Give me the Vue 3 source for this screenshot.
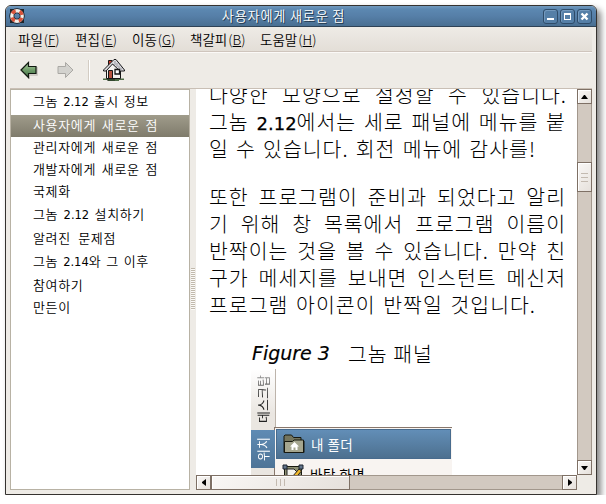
<script setup>
const menus = [
  { label: '파일', key: 'F', w: 57 },
  { label: '편집', key: 'E', w: 57 },
  { label: '이동', key: 'G', w: 58 },
  { label: '책갈피', key: 'B', w: 70 },
  { label: '도움말', key: 'H', w: 60 }
]
const topics = [
  { t: ['그놈 ', '2.12', ' 출시 정보'], w: 116, tall: true },
  { t: ['사용자에게 새로운 점'], w: 125, on: true },
  { t: ['관리자에게 새로운 점'], w: 125 },
  { t: ['개발자에게 새로운 점'], w: 125 },
  { t: ['국제화'], w: 41 },
  { t: ['그놈 ', '2.12', ' 설치하기'], w: 112, tall: true },
  { t: ['알려진 문제점'], w: 83 },
  { t: ['그놈 ', '2.14', '와 그 이후'], w: 116, tall: true },
  { t: ['참여하기'], w: 53 },
  { t: ['만든이'], w: 41 }
]
const paragraphs = [
  [
    { t: ['다양한 모양으로 설정할 수 있습니다.'], w: 358 },
    { t: ['그놈 ', '2.12', '에서는 세로 패널에 메뉴를 붙'], w: 357 },
    { t: ['일 수 있습니다. 회전 메뉴에 감사를!'], w: 327 }
  ],
  [
    { t: ['또한 프로그램이 준비과 되었다고 알리'], w: 357 },
    { t: ['기 위해 창 목록에서 프로그램 이름이'], w: 357 },
    { t: ['반짝이는 것을 볼 수 있습니다. 만약 친'], w: 357 },
    { t: ['구가 메세지를 보내면 인스턴트 메신저'], w: 357 },
    { t: ['프로그램 아이콘이 반짝일 것입니다.'], w: 327 }
  ]
]
</script>

<template>
  <div class="window">
    <header class="titlebar">
      <svg class="buoy" width="16" height="16" viewBox="0 0 16 16">
        <path d="M1 1h3v3H1zM12 1h3v3h-3zM1 12h3v3H1zM12 12h3v3h-3z" fill="#20252b" />
        <circle cx="8" cy="8" r="5.2" fill="none" stroke="#15191e" stroke-width="5" />
        <circle cx="8" cy="8" r="5.2" fill="none" stroke="#f3efea" stroke-width="3.4" />
        <circle cx="8" cy="8" r="5.2" fill="none" stroke="#d9533a" stroke-width="3.4" stroke-dasharray="4.083 4.083" stroke-dashoffset="-2.04" />
      </svg>
      <span class="title">사용자에게 새로운 점</span>
      <div class="winbtns">
        <span class="wb"><svg width="9" height="9"><path d="M1 6h7v2H1z" fill="#fff" /></svg></span>
        <span class="wb"><svg width="9" height="9"><path d="M1 1h7v7H1zM2 3v4h5V3z" fill="#fff" fill-rule="evenodd" /></svg></span>
        <span class="wb"><svg width="9" height="9"><path d="M1.500 1.500l6 6M7.500 1.500l-6 6" stroke="#fff" stroke-width="2.400" /></svg></span>
      </div>
    </header>
    <nav class="menubar">
      <span v-for="m in menus" :key="m.key" class="menu" :style="{ width: m.w + 'px' }">{{ m.label }}<span class="accel">(<u>{{ m.key }}</u>)</span></span>
    </nav>
    <div class="toolbar">
      <svg width="18" height="18" viewBox="0 0 18 18">
        <defs>
          <linearGradient id="green" x1="0" y1="0" x2="0" y2="1"><stop offset="0" stop-color="#b2d0a6" /><stop offset=".5" stop-color="#6f9c69" /><stop offset="1" stop-color="#3f6d43" /></linearGradient>
        </defs>
        <path d="M2 10l7 7v-3h8V6" fill="none" stroke="#c5c1ba" stroke-width="1.5" />
        <path d="M1 9l7.500-7.500V5.500H16V12.500H8.500V16.500z" fill="url(#green)" stroke="#101810" stroke-width="1.200" />
      </svg>
      <svg class="fwd" width="18" height="18" viewBox="0 0 18 18">
        <path d="M17 9L9.500 1.500V5.500H2V12.500H9.500V16.500z" fill="#d3d2ce" stroke="#aaa8a4" />
      </svg>
      <i class="tsep"></i>
      <svg class="home" width="24" height="24" viewBox="0 0 24 24">
        <path d="M1 20.500h21v1.500H17v1H6v-1H1z" fill="#4d6b45" />
        <path d="M6.500 2.500H10V6L6.500 9z" fill="#c8402f" stroke="#1c1513" />
        <path d="M4.500 11.500L9 5l9.500 6v9.500h-14z" fill="#f4f2f0" stroke="#151515" />
        <path d="M1.500 12L7 6.500 12 1.500h2L22.500 12v1H18L10.500 6 4 13H1.500z" fill="#dcdce0" stroke="#19191b" />
        <path d="M13 3v4M15 5v4M17 7.500v4M19 9.500v3" stroke="#96969e" />
        <path d="M6.500 12.500h4V20.500h-4z" fill="#b6523f" stroke="#151515" />
        <path d="M13 11.500h4.500v4.500H13z" fill="#fff" stroke="#151515" stroke-width="1.300" />
        <path d="M5 22h8" stroke="#1b2418" />
      </svg>
    </div>
    <main class="body">
      <aside class="sidebar">
        <div v-for="(r, i) in topics" :key="i" class="row" :class="{ tall: r.tall, on: r.on }">
          <span class="fit" :style="{ width: r.w + 'px' }"><span v-for="(s, k) in r.t" :key="k" :class="{ num: k === 1 }">{{ s }}</span></span>
        </div>
      </aside>
      <div class="splitter"><i class="grip"></i></div>
      <section class="pane">
        <article class="doc">
          <div v-for="(p, i) in paragraphs" :key="i" class="para">
            <div v-for="(l, j) in p" :key="j" class="line fit" :style="{ width: l.w + 'px' }"><span v-for="(s, k) in l.t" :key="k" :class="{ num: k === 1 }">{{ s }}</span></div>
          </div>
          <div class="caption"><em>Figure 3</em><span>그놈 패널</span></div>
          <div class="figure">
            <div class="strip">
              <span class="tab desk">데스크탑</span>
              <span class="tab place">위치</span>
            </div>
            <div class="popup">
              <div class="entry sel">
                <svg width="22" height="20" viewBox="0 0 22 20">
                  <path d="M1 18.500V2L2 1h6.500l2 2.500H18V7h3v11.500z" fill="#74755e" stroke="#17180f" />
                  <path d="M1.500 7.500h8L11 6h9.500v12.500h-19z" fill="#a5a68f" stroke="#17180f" />
                  <path d="M7 12.500L11.500 8l4.500 4.500h-1.500V16h-2v-2.500h-2V16h-2v-3.500z" fill="#fff" />
                </svg>
                <span>내 폴더</span>
              </div>
              <div class="entry">
                <svg width="22" height="20" viewBox="0 0 22 20">
                  <path d="M2.500 2.500h17v16h-17z" fill="#8c8f73" stroke="#17180f" />
                  <path d="M5 5h7l3 3v9H5z" fill="#f5f5ef" stroke="#222" />
                  <path d="M10 13l7-8 2.500 2-7 8-3 1z" fill="#f0b92c" stroke="#222" />
                  <path d="M1 1h4v4H1zM17 1h4v4h-4z" fill="#62748b" stroke="#1c2430" />
                </svg>
                <span>바탕 화면</span>
              </div>
            </div>
          </div>
        </article>
        <div class="vbar">
          <span class="btn"><svg width="7" height="4"><path d="M0 4h7L4 0H3z" fill="#000" /></svg></span>
          <span class="vgap"></span>
          <span class="btn vthumb"><i></i><i></i><i></i></span>
          <span class="fill"></span>
          <span class="btn"><svg width="7" height="4"><path d="M0 0h7L4 4H3z" fill="#000" /></svg></span>
        </div>
        <div class="hbar">
          <span class="btn"><svg width="4" height="7"><path d="M4 0v7L0 4V3z" fill="#000" /></svg></span>
          <span class="btn hthumb"><i></i><i></i><i></i></span>
          <span class="fill"></span>
          <span class="btn"><svg width="4" height="7"><path d="M0 0v7L4 4V3z" fill="#000" /></svg></span>
        </div>
      </section>
    </main>
  </div>
</template>

<style>
body { background: #fff; overflow: hidden; }
</style>

<style scoped>
* { box-sizing: border-box; }
svg { display: block; flex: none; }
.window {
  width: 592px; height: 490px; margin: 5px 0 0 5px;
  display: flex; flex-direction: column;
  border: 1px solid #35322f; border-radius: 6px 6px 0 0;
  background: #eeebe6; overflow: hidden;
  box-shadow: 4px 4px 6px rgba(0, 0, 0, .48);
  font-family: "Noto Sans CJK KR", sans-serif;
  font-size: 13px; font-weight: 350; color: #000;
}
.titlebar {
  height: 21px; flex: none; display: flex; align-items: center;
  background: linear-gradient(#7199be 0, #5c88b1 3px, #567fa8 50%, #496f92);
  border-bottom: 1px solid #2e4256; padding: 0 4px 0 3px;
}
.title {
  flex: 1; text-align: center; color: #fff; font-size: 13.2px; line-height: 20px; letter-spacing: .75px;
  padding-right: 1px; white-space: nowrap; text-shadow: 1px 1px 0 #24384c;
}
.winbtns { display: flex; gap: 2px; }
.wb {
  width: 15px; height: 15px; display: flex; align-items: center; justify-content: center;
  border: 1px solid #2f4c69; border-radius: 3px; background: #557fa7;
  box-shadow: inset 1px 1px 0 #7399bd;
}
.menubar {
  height: 25px; flex: none; display: flex; align-items: center; margin-right: 4px; margin-left: 4px;
  padding-left: 8px; background: linear-gradient(#eeebe6, #e3ded7);
  border-bottom: 1px solid #cfc5bd; box-shadow: 0 1px 0 #fbf9f7;
}
.menu { white-space: nowrap; font-size: 13.5px; line-height: 22px; }
.accel { font-size: 13.5px; font-weight: 300; margin-left: 1px; }
.toolbar { height: 36px; flex: none; display: flex; align-items: center; padding-left: 14px; }
.fwd { margin-left: 18px; }
.tsep { width: 2px; height: 21px; margin: 0 12px 0 14px; border-left: 1px solid #d3ccc3; border-right: 1px solid #fff; }
.body {
  height: 402px; flex: none; display: flex; margin: 0 4px;
  border-top: 1px solid #c9bfb5;
}
.sidebar { width: 180px; height: 401px; border: 1px solid #b8b2a4; background: #fff; }
.row { height: 22px; display: flex; align-items: center; padding: 0 0 2px 22px; line-height: 20px; letter-spacing: .65px; }
.tall { height: 25px; }
.row .num { font-family: "DejaVu Sans", sans-serif; font-weight: 400; font-size: 11.5px; letter-spacing: 0; }
.fit { display: block; text-align: justify; text-align-last: justify; }
.on { color: #fff; background: linear-gradient(#a09c8b, #7f7b6b); }
.splitter { width: 6px; display: flex; align-items: center; justify-content: center; }
.grip { width: 4px; height: 42px; background: repeating-linear-gradient(#c1b9ac 0 1px, #fbfaf8 1px 2px); margin-top: -2px; }
.pane {
  width: 396px; height: 401px; display: grid;
  grid-template-columns: 381px 15px; grid-template-rows: 386px 15px;
}
.doc { background: #fff; overflow: hidden; padding: 0 0 0 13px; font-weight: 300; }
.para { margin-bottom: 21px; }
.para:first-child { margin-top: -8px; }
.line { height: 27px; line-height: 27px; font-size: 20.5px; letter-spacing: 1px; }
.line .num { font-family: "DejaVu Sans", sans-serif; font-weight: 400; font-size: 18px; letter-spacing: 0; -webkit-text-stroke: .25px #000; }
.caption { height: 27px; line-height: 27px; margin-top: 22px; padding-left: 43px; font-size: 20.5px; letter-spacing: 1px; display: flex; white-space: nowrap; }
.caption em { font-family: "DejaVu Sans", sans-serif; font-weight: 400; font-size: 19px; width: 96px; letter-spacing: 0; -webkit-text-stroke: .2px #000; }
.figure { display: flex; margin: 2px 0 0 42px; height: 120px; }
.strip {
  width: 25px; height: 120px; flex: none; display: flex; flex-direction: column;
  background: linear-gradient(#fff, #eae6e1 45px); border-right: 1px solid #bdb4ab;
}
.tab {
  writing-mode: vertical-rl; text-orientation: sideways; transform: rotate(180deg); width: 24px; line-height: 24px;
  font-size: 13px; text-align: center; font-weight: 400;
}
.desk { height: 61px; color: #222; -webkit-mask-image: linear-gradient(to top, rgba(0, 0, 0, .3), #000 32px); mask-image: linear-gradient(to top, rgba(0, 0, 0, .3), #000 32px); }
.place { height: 38px; color: #fff; background: linear-gradient(#4e7497, #5f8bb4); }
.popup {
  width: 178px; height: 80px; flex: none; margin: 58px 0 0 -2px; background: #f8f4f1;
  border-top: 1px solid #88776b; border-left: 1px solid #88776b; padding: 1px 1px 0 1px;
}
.entry { height: 30px; display: flex; align-items: center; gap: 6px; padding-left: 6px; font-size: 13.5px; letter-spacing: .5px; font-weight: 400; }
.sel { color: #fff; background: linear-gradient(#628eb7, #4d708f); border: 1px solid #486b8d; }
.vbar { display: flex; flex-direction: column; background: #d2c9c0; border-left: 1px solid #a2978c; border-right: 1px solid #a2978c; }
.hbar { display: flex; background: #d2c9c0; border-top: 1px solid #a2978c; border-bottom: 1px solid #a2978c; }
.btn {
  width: 15px; height: 15px; flex: none; display: flex; align-items: center; justify-content: center;
  border: 1px solid #7e7065; background: linear-gradient(135deg, #f9f7f5, #e6e1dc);
  box-shadow: inset 1px 1px 0 #fff;
}
.vbar .btn { margin-left: -1px; }
.hbar .btn { margin-top: -1px; }
.vgap { height: 58px; }
.fill { flex: 1; }
.vbar .vthumb { height: 30px; flex-direction: column; gap: 3px; }
.vthumb i { width: 7px; height: 1px; background: #c3bab0; }
.hbar .hthumb { width: 139px; gap: 2px; }
.hthumb i { width: 1px; height: 7px; margin-right: 1px; background: #c3bab0; }
</style>
